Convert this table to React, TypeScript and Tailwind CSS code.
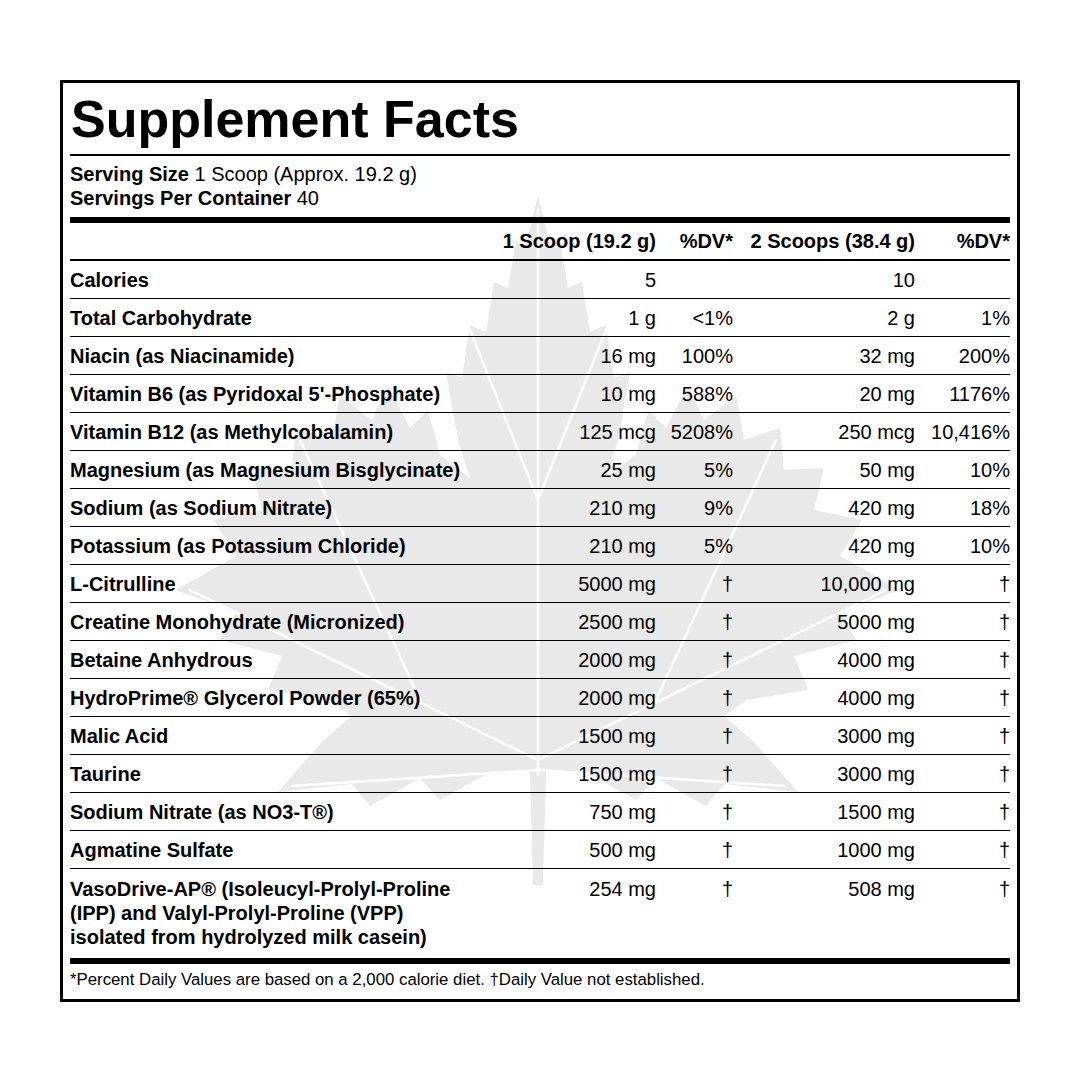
import React from "react";

type Row = [string, string, string, string, string];

const rows: Row[] = [
  ["Calories", "5", "", "10", ""],
  ["Total Carbohydrate", "1 g", "<1%", "2 g", "1%"],
  ["Niacin (as Niacinamide)", "16 mg", "100%", "32 mg", "200%"],
  ["Vitamin B6 (as Pyridoxal 5'-Phosphate)", "10 mg", "588%", "20 mg", "1176%"],
  ["Vitamin B12 (as Methylcobalamin)", "125 mcg", "5208%", "250 mcg", "10,416%"],
  ["Magnesium (as Magnesium Bisglycinate)", "25 mg", "5%", "50 mg", "10%"],
  ["Sodium (as Sodium Nitrate)", "210 mg", "9%", "420 mg", "18%"],
  ["Potassium (as Potassium Chloride)", "210 mg", "5%", "420 mg", "10%"],
  ["L-Citrulline", "5000 mg", "†", "10,000 mg", "†"],
  ["Creatine Monohydrate (Micronized)", "2500 mg", "†", "5000 mg", "†"],
  ["Betaine Anhydrous", "2000 mg", "†", "4000 mg", "†"],
  ["HydroPrime® Glycerol Powder (65%)", "2000 mg", "†", "4000 mg", "†"],
  ["Malic Acid", "1500 mg", "†", "3000 mg", "†"],
  ["Taurine", "1500 mg", "†", "3000 mg", "†"],
  ["Sodium Nitrate (as NO3-T®)", "750 mg", "†", "1500 mg", "†"],
  ["Agmatine Sulfate", "500 mg", "†", "1000 mg", "†"],
];

// left half of the leaf outline, top tip down to the stem; right half is mirrored
const half: [number, number][] = [
  [538, 195], [526, 245], [516, 241], [508, 288], [494, 282], [486, 332],
  [470, 325], [462, 378], [446, 372], [458, 440], [470, 478],
  [440, 455], [428, 410], [410, 428], [388, 386], [372, 420], [340, 396],
  [332, 440], [296, 428], [292, 470], [252, 468], [262, 510], [214, 520],
  [236, 556], [176, 590],
  [236, 612], [220, 640], [282, 656], [268, 690], [330, 700], [352, 716],
  [322, 742], [278, 792], [352, 784], [370, 806], [420, 778], [440, 800],
  [490, 772], [530, 772],
];

const leafPath = () => {
  const left = half.map(([x, y]) => `${x},${y}`).join(" L");
  const right = [...half]
    .slice(1)
    .reverse()
    .map(([x, y]) => `${1076 - x},${y}`)
    .join(" L");
  return `M${left} L533,885 L543,885 L${right} Z`;
};

const MapleLeaf = () => (
  <svg
    className="absolute inset-0 pointer-events-none"
    width="1080"
    height="1080"
    viewBox="0 0 1080 1080"
  >
    <path d={leafPath()} fill="#e9e9e9" />
    <g stroke="#ffffff" strokeWidth="2.5" strokeLinecap="round" fill="none">
      <path d="M538 775 L538 210" />
      <path d="M538 760 L190 590" />
      <path d="M538 760 L886 590" />
      <path d="M538 770 L292 786" />
      <path d="M538 770 L784 786" />
      <path d="M420 700 L300 440" />
      <path d="M656 700 L776 440" />
      <path d="M538 500 L470 330" />
      <path d="M538 500 L606 330" />
    </g>
  </svg>
);

const grid = "grid grid-cols-[400px_186px_77px_182px_95px]";

const DataRow = ({ r }: { r: Row }) => (
  <div className={`${grid} h-[38px] items-center border-b border-black text-[20px] leading-[24px]`}>
    <div className="font-bold">{r[0]}</div>
    <div className="text-right">{r[1]}</div>
    <div className="text-right">{r[2]}</div>
    <div className="text-right">{r[3]}</div>
    <div className="text-right">{r[4]}</div>
  </div>
);

export default function App() {
  return (
    <div className="relative w-[1080px] h-[1080px] bg-white overflow-hidden pt-[80px] pl-[60px] text-black font-['Liberation_Sans',Arial,sans-serif]">
      <MapleLeaf />
      <div className="relative w-[960px] h-[922px] border-[3px] border-black px-[7px]">
        <div className="pt-[10px] pb-[9px] border-b-2 border-black">
          <h1 className="text-[52px] leading-none font-bold pl-[1px]">Supplement Facts</h1>
        </div>
        <div className="pt-[6px] text-[20px] leading-[24px]">
          <div>
            <span className="font-bold">Serving Size</span> 1 Scoop (Approx. 19.2 g)
          </div>
          <div>
            <span className="font-bold">Servings Per Container</span> 40
          </div>
        </div>
        <div className="mt-[7px] h-[6px] bg-black" />
        <div className={`${grid} h-[38px] items-center border-b-2 border-black text-[20px] leading-[24px] font-bold`}>
          <div />
          <div className="text-right">1 Scoop (19.2 g)</div>
          <div className="text-right">%DV*</div>
          <div className="text-right">2 Scoops (38.4 g)</div>
          <div className="text-right">%DV*</div>
        </div>
        {rows.map((r) => (
          <DataRow key={r[0]} r={r} />
        ))}
        <div className={`${grid} items-start pt-[8px] pb-[9px] text-[20px] leading-[24px]`}>
          <div className="font-bold">
            VasoDrive-AP® (Isoleucyl-Prolyl-Proline
            <br />
            (IPP) and Valyl-Prolyl-Proline (VPP)
            <br />
            isolated from hydrolyzed milk casein)
          </div>
          <div className="text-right">254 mg</div>
          <div className="text-right">†</div>
          <div className="text-right">508 mg</div>
          <div className="text-right">†</div>
        </div>
        <div className="h-[6px] bg-black" />
        <p className="pt-[6px] text-[16.8px] leading-[20px]">
          *Percent Daily Values are based on a 2,000 calorie diet. †Daily Value not established.
        </p>
      </div>
    </div>
  );
}
